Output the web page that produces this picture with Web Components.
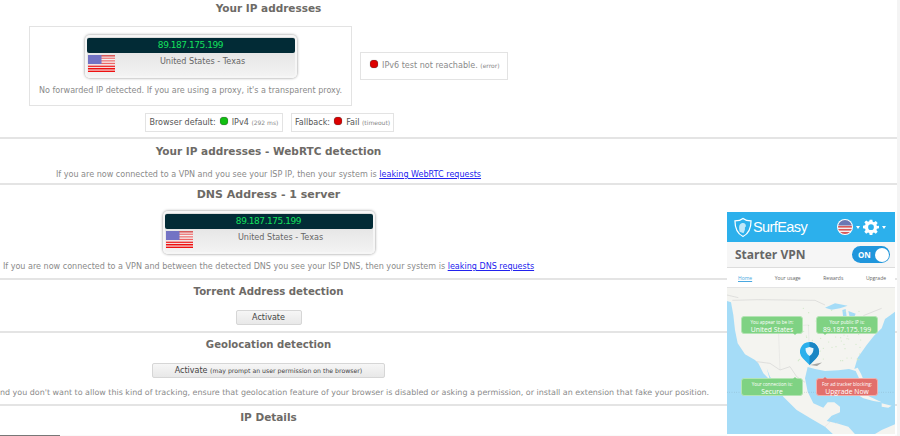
<!DOCTYPE html>
<html>
<head>
<meta charset="utf-8">
<title>IP leak</title>
<style>
  html, body { margin: 0; padding: 0; background: #fff; overflow: hidden; height: 436px; }
  body { font-family: "DejaVu Sans", Verdana, sans-serif; color: #777; position: relative; }
</style>
</head>
<body>

<template id="flag-tpl">
  <style>:host { display: block; line-height: 0; }</style>
  <svg width="27" height="17" viewBox="0 0 27 17">
    <rect width="27" height="17" fill="#f4f1f1"/>
    <rect y="0" width="27" height="1.6" fill="#d95a5a"/>
    <rect y="2.6" width="27" height="1.3" fill="#e77"/>
    <rect y="5.2" width="27" height="1.3" fill="#e77"/>
    <rect y="7.8" width="27" height="1.3" fill="#e66"/>
    <rect y="10.6" width="27" height="1.5" fill="#e33"/>
    <rect y="13" width="27" height="1.5" fill="#e11"/>
    <rect y="15.6" width="27" height="1.4" fill="#e11"/>
    <rect width="13.5" height="9" fill="#7373c4"/>
  </svg>
</template>

<template id="ip-box-tpl">
  <style>
    :host {
      display: block; width: 212px; height: 43px; box-sizing: border-box; padding: 3px 2px;
      border-radius: 5px; background: linear-gradient(#dcdcdc, #f4f4f4);
      box-shadow: 0 0 3px #888, inset 0 0 0 2px #f6f6f6;
    }
    .ip {
      height: 15px; background: #022b36; border-radius: 2px; color: #12e05c;
      font: 9px/15px "DejaVu Sans", sans-serif; letter-spacing: -0.45px; text-align: center;
    }
    .row { display: flex; padding-top: 2px; }
    .place { flex: 1; text-align: center; font-size: 8.1px; line-height: 13px; color: #666; padding-right: 4px; }
    flag-us { margin-left: 1px; }
  </style>
  <div class="ip"><slot name="ip"></slot></div>
  <div class="row"><flag-us></flag-us><div class="place"><slot name="place"></slot></div></div>
</template>

<template id="dot-tpl">
  <style>
    :host { display: inline-block; width: 8px; height: 8px; border-radius: 50%; vertical-align: 0; margin: 0 1.5px;
      background: var(--dot, #d00); box-shadow: 0 0 1px #333 inset, 0 0 1px #777; }
  </style>
</template>

<template id="chip-tpl">
  <style>
    :host { display: inline-block; border: 1px solid #e3e3e3; box-sizing: border-box; white-space: nowrap; color: #555; }
    ::slotted(small) { font-size: 6px; color: #888; }
  </style>
  <slot></slot>
</template>

<template id="section-tpl">
  <style>
    :host { display: block; box-sizing: border-box; border-bottom: 2px solid #e4e4e4; }
    .col { width: 537px; text-align: center; }
    h2 { margin: 0; font-size: var(--title-size, 10.5px); line-height: 14px; color: #6d6a66; font-weight: bold; }
    .inner { display: flex; flex-direction: column; align-items: center; }
    ::slotted(p) { margin: 0; font-size: 8.05px; color: #8a8a8a; white-space: nowrap; }
  </style>
  <div class="col">
    <h2><slot name="title"></slot></h2>
    <div class="inner"><slot></slot></div>
  </div>
</template>

<template id="btn-tpl">
  <style>
    :host { display: inline-block; box-sizing: border-box; height: 15px; line-height: 14px; text-align: center;
      background: linear-gradient(#f6f6f6, #e8e8e8); border: 1px solid #d6d6d6; border-radius: 2px;
      font-size: 8px; color: #444; }
    ::slotted(small) { font-size: 6.2px; }
  </style>
  <slot></slot>
</template>

<template id="widget-tpl">
  <style>
    :host { display: block; position: absolute; left: 727px; top: 212px; width: 168px; height: 224px; background: #fff;
      font-family: "Open Sans", "DejaVu Sans", sans-serif; overflow: hidden; }
    header { height: 30px; background: #2cb0ec; display: flex; align-items: center; padding: 0 8px 0 7px; color: #fff; }
    .brand { display: flex; align-items: center; font: 14.5px "Liberation Sans", sans-serif; letter-spacing: -0.6px; gap: 1px; flex: 1; }
    .tools { display: flex; align-items: center; gap: 2px; }
    .caret { width: 0; height: 0; border: 2.5px solid transparent; border-top: 3px solid #fff; border-bottom: 0; margin: 0 1px 0 1px; }
    .plan { height: 26px; display: flex; align-items: center; justify-content: space-between; padding: 0 5px 0 8px; background: #f6f6f6; border-bottom: 1px solid #ddd; box-sizing: border-box; }
    .plan b { font-size: 12px; color: #666; }
    .toggle { width: 38px; height: 17px; border-radius: 9px; background: #2096dc; color: #fff; font: bold 8px/17px "Open Sans", sans-serif; padding-left: 6px; box-sizing: border-box; position: relative; }
    .toggle::after { content: ""; position: absolute; right: 1px; top: 1.5px; width: 14px; height: 14px; border-radius: 50%; background: #fff; }
    nav { height: 20px; display: flex; justify-content: space-between; align-items: center; padding: 0 9px 0 11px; font-size: 5px; color: #666; border-bottom: 1px solid #e4e4e4; box-sizing: border-box; }
    nav a { color: #4aa8e0; text-decoration: underline; }
    .map { position: relative; height: 146px; background: #a5dcf7; overflow: hidden; }
    .map svg.land { position: absolute; left: 0; top: 0; }
    .bubble { position: absolute; width: 62px; height: 18px; border-radius: 3px; background: #7fd283; box-sizing: border-box; color: #fff; text-align: center;
      font-size: 4.6px; line-height: 7px; padding-top: 2px; border: 1px solid #b4e4b4; }
    .bubble b { display: block; font-weight: normal; font-size: 6.8px; line-height: 8px; }
    .bubble.red { background: #e2706c; border-color: #f0b0ad; }
    .bubble::after { content: ""; position: absolute; left: var(--tail); width: 0; height: 0; border: 2px solid transparent; }
    .bubble.down::after { top: 100%; border-top-color: #7fd283; }
    .bubble.up::after { bottom: 100%; border-bottom-color: #7fd283; }
    .bubble.red.up::after { border-bottom-color: #e2706c; }
    .pin { position: absolute; left: 73px; top: 54px; }
  </style>
  <header>
    <div class="brand">
      <svg width="18" height="21" viewBox="0 0 19 21"><path d="M9.5 1 C7 3 4 3.5 1 3.5 C1 11 3 17 9.5 20 C16 17 18 11 18 3.5 C15 3.5 12 3 9.5 1Z" fill="none" stroke="#fff" stroke-width="1.3"/><path d="M6 15 C5 11 5 7 8 6 C11 5 13 7 12.5 9.5 L11.5 10.5 C11.5 12 12 13 10 16.5" fill="#d8f1fc" opacity=".85"/></svg>
      <span>SurfEasy</span>
    </div>
    <div class="tools">
      <svg width="16" height="16" viewBox="0 0 16 16"><defs><clipPath id="c"><circle cx="8" cy="8" r="7"/></clipPath></defs><circle cx="8" cy="8" r="8" fill="#fff"/><g clip-path="url(#c)"><rect width="16" height="16" fill="#f3f0f0"/><rect y="7" width="16" height="1.6" fill="#d8595a"/><rect y="10" width="16" height="1.6" fill="#d8595a"/><rect y="13" width="16" height="2" fill="#d8595a"/><rect width="16" height="6.5" fill="#6a78b4"/></g></svg>
      <i class="caret"></i>
      <svg width="16" height="16" viewBox="0 0 24 24"><path fill="#fff" fill-rule="evenodd" d="M10 1h4l.6 3.2 1.9.8 2.7-1.9 2.8 2.8-1.9 2.7.8 1.9L24 10v4l-3.1.6-.8 1.9 1.9 2.7-2.8 2.8-2.7-1.9-1.9.8L14 24h-4l-.6-3.1-1.9-.8-2.7 1.9-2.8-2.8 1.9-2.7-.8-1.9L0 14v-4l3.1-.5.8-1.9L2 4.9l2.8-2.8 2.7 1.9 1.9-.8zM12 8a4.3 4.3 0 1 0 0 8.6A4.3 4.3 0 0 0 12 8z"/></svg>
      <i class="caret"></i>
    </div>
  </header>
  <div class="plan"><b>Starter VPN</b><div class="toggle">ON</div></div>
  <nav><a>Home</a><span>Your usage</span><span>Rewards</span><span>Upgrade</span></nav>
  <div class="map">
    <svg class="land" width="168" height="148" viewBox="6 -21 504 444">
      <path fill="#f4f4f0" d="M6 -21H510V50L497 60 480 72 470 100 447 122 425 150 398 188 388 222 398 218 408 236 416 256 405 256 392 228 372 222 340 226 300 228 270 222 248 216 240 250 248 290 265 325 295 338 308 322 328 322 345 335 345 352 320 362 305 378 335 385 370 395 395 423H330L300 395 260 372 215 345 175 305 150 265 135 245 125 220 135 255 115 235 100 205 90 195 60 178 38 145 30 105 25 60 18 22 6 18Z"/>
      <path fill="#f4f4f0" d="M395 298L430 303 470 322 445 318 415 310Z M470 325L500 332 490 338 470 335Z M440 423L470 405 510 388V423Z"/>
      <path fill="#a5dcf7" d="M300 38L330 25 368 32 345 40 320 44Z M352 45L362 42 366 72 356 78Z M370 48L392 56 385 72 374 66Z M380 78L412 68 405 78 385 84Z"/>
      <path fill="none" stroke="#c6c6c6" stroke-width="1.4" d="M22 16L100 14 270 16 300 30 M415 62L470 40 M95 200L135 205 165 225 195 215 215 245 240 262 M6 0L40 8"/>
      <path fill="none" stroke="#d6d6d6" stroke-width="1" d="M300 395L345 352 M330 385L345 380 M60 90L160 95 250 90 M160 95L165 225 M250 90L255 215"/>
      <g id="specks" fill="#cfe8c6"></g>
      <path d="M6 292H510" stroke="#7f9aa8" stroke-width="1.2" stroke-dasharray="2 5"/>
    </svg>
    <div class="bubble down" style="left:14px;top:28px;--tail:51px">You appear to be in:<b>United States</b></div>
    <div class="bubble down" style="left:89px;top:28px;--tail:6px">Your public IP is:<b>89.187.175.199</b></div>
    <div class="bubble up" style="left:14px;top:90px;--tail:51px">Your connection is:<b>Secure</b></div>
    <div class="bubble red up" style="left:89px;top:90px;--tail:6px">For ad tracker blocking:<b>Upgrade Now</b></div>
    <svg class="pin" width="26" height="26" viewBox="0 0 26 26"><path d="M10 23l12-2.5-5 3.5Z" fill="#666" opacity=".55"/><path d="M9.5 0a9.5 9.5 0 0 1 6.5 16.4L9.5 23 3 16.4A9.5 9.5 0 0 1 9.5 0Z" fill="#2cb0ec"/><path d="M9.5 0a9.5 9.5 0 0 1 6.5 16.4L9.5 23Z" fill="#1b86c4"/><path d="M9.5 5l4 1.2c0 3.5-1.2 6-4 7.8-2.8-1.8-4-4.3-4-7.8Z" fill="#eaf6fc"/></svg>
  </div>
</template>

<ip-section style="height:139px">
  <span slot="title" style="display:block;padding-top:1px">Your IP addresses</span>
  <div style="width:100%;height:123px">
    <div style="display:flex;align-items:center;gap:8px;padding:11px 0 0 29px">
      <div style="width:323px;height:80px;box-sizing:border-box;border:1px solid #e3e3e3;display:flex;flex-direction:column;align-items:center;padding-top:8px;flex:none">
        <ip-box><span slot="ip">89.187.175.199</span><span slot="place">United States - Texas</span></ip-box>
        <div style="font-size:8.05px;color:#8a8a8a;margin-top:8px;white-space:nowrap">No forwarded IP detected. If you are using a proxy, it's a transparent proxy.</div>
      </div>
      <info-chip style="font-size:8.05px;color:#8a8a8a;width:148px;height:28px;line-height:26px;flex:none;text-align:center"><status-dot></status-dot> IPv6 test not reachable. <small>(error)</small></info-chip>
    </div>
    <div style="display:flex;justify-content:center;gap:8px;padding:7px 0 0 2px">
      <info-chip style="font-size:8.05px;line-height:17px;padding:0 3.5px;height:19px">Browser default: <status-dot style="--dot:#12c012"></status-dot> IPv4 <small>(292 ms)</small></info-chip>
      <info-chip style="font-size:8.05px;line-height:17px;padding:0 3px;height:19px">Fallback: <status-dot></status-dot> Fail <small>(timeout)</small></info-chip>
    </div>
  </div>
</ip-section>

<ip-section style="height:46px">
  <span slot="title" style="display:block;padding-top:5px">Your IP addresses - WebRTC detection</span>
  <p style="margin-top:12px">If you are now connected to a VPN and you see your ISP IP, then your system is <a href="#" style="color:#22e">leaking WebRTC requests</a></p>
</ip-section>

<ip-section style="height:95px;--title-size:11px">
  <span slot="title" style="display:block;padding-top:3px">DNS Address - 1 server</span>
  <ip-box style="margin-top:9px"><span slot="ip">89.187.175.199</span><span slot="place">United States - Texas</span></ip-box>
  <p style="margin-top:8px">If you are now connected to a VPN and between the detected DNS you see your ISP DNS, then your system is <a href="#" style="color:#22e">leaking DNS requests</a></p>
</ip-section>

<ip-section style="height:53px;--title-size:10.2px">
  <span slot="title" style="display:block;padding-top:5px">Torrent Address detection</span>
  <ip-button style="width:66px;margin-top:11px">Activate</ip-button>
</ip-section>

<ip-section style="height:73px;--title-size:10.1px">
  <span slot="title" style="display:block;padding-top:5px">Geolocation detection</span>
  <ip-button style="width:233px;margin-top:11px">Activate <small>(may prompt an user permission on the browser)</small></ip-button>
  <p style="margin-top:10px;align-self:flex-start;font-size:7.96px">nd you don't want to allow this kind of tracking, ensure that geolocation feature of your browser is disabled or asking a permission, or install an extension that fake your position.</p>
</ip-section>

<ip-section style="border:0">
  <span slot="title" style="display:block;padding-top:4px">IP Details</span>
</ip-section>

<div style="position:absolute;left:0;right:0;bottom:0;height:1px;background:#fafafa"><div style="width:60px;height:1px;background:#777"></div></div>
<div style="position:absolute;right:0;top:0;bottom:0;width:3px;background:#f4f4f4"></div>

<vpn-widget></vpn-widget>

<script>
  function shadowFrom(el, id) {
    el.attachShadow({ mode: "open" });
    el.shadowRoot.appendChild(document.getElementById(id).content.cloneNode(true));
  }

  class FlagUs extends HTMLElement {
    constructor() { super(); shadowFrom(this, "flag-tpl"); }
  }
  class IpBox extends HTMLElement {
    constructor() { super(); shadowFrom(this, "ip-box-tpl"); }
  }
  class StatusDot extends HTMLElement {
    constructor() { super(); shadowFrom(this, "dot-tpl"); }
  }
  class InfoChip extends HTMLElement {
    constructor() { super(); shadowFrom(this, "chip-tpl"); }
  }
  class IpSection extends HTMLElement {
    constructor() { super(); shadowFrom(this, "section-tpl"); }
  }
  class IpButton extends HTMLElement {
    constructor() { super(); shadowFrom(this, "btn-tpl"); }
  }
  class VpnWidget extends HTMLElement {
    constructor() {
      super();
      shadowFrom(this, "widget-tpl");
      // green town specks over the eastern half of the map
      const g = this.shadowRoot.getElementById("specks");
      let seed = 7;
      const rnd = () => (seed = (seed * 16807) % 2147483647) / 2147483647;
      let dots = "";
      for (let i = 0; i < 70; i++) {
        const x = 220 + rnd() * 200, y = 40 + rnd() * 170;
        if (x + y * 0.9 < 590) dots += `<circle cx="${x.toFixed(0)}" cy="${y.toFixed(0)}" r="1.8"/>`;
      }
      g.innerHTML = dots;
    }
  }

  customElements.define("flag-us", FlagUs);
  customElements.define("ip-box", IpBox);
  customElements.define("status-dot", StatusDot);
  customElements.define("info-chip", InfoChip);
  customElements.define("ip-section", IpSection);
  customElements.define("ip-button", IpButton);
  customElements.define("vpn-widget", VpnWidget);
</script>
</body>
</html>
